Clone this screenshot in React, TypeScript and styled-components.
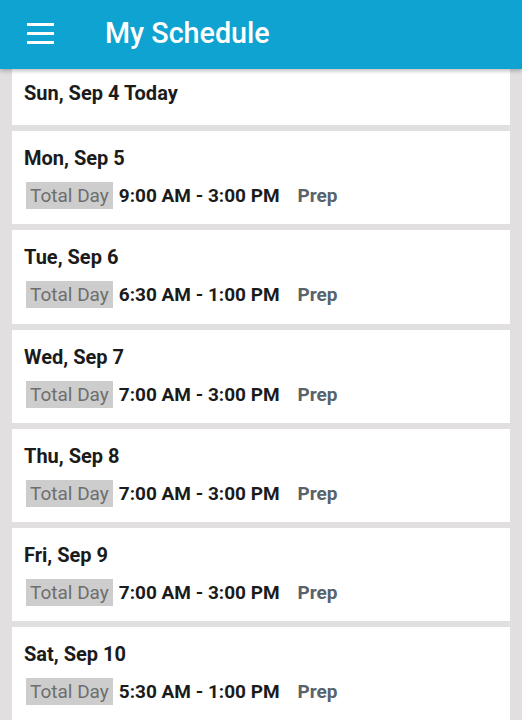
import styled, { createGlobalStyle } from "styled-components";

const GlobalStyle = createGlobalStyle`
  html, body {
    margin: 0;
    padding: 0;
    height: 100%;
    overflow: hidden;
    background: #e1dfdf;
    font-family: Roboto, "Liberation Sans", Arial, sans-serif;
  }
`;

const Screen = styled.div`
  width: 522px;
  height: 720px;
  overflow: hidden;
  background: #e1dfdf;
`;

const AppBar = styled.header`
  position: relative;
  z-index: 2;
  height: 69px;
  display: flex;
  align-items: center;
  background: #0fa3d1;
  box-shadow: 0 2px 4px rgba(0, 0, 0, 0.25);
`;

const MenuButton = styled.button`
  width: 27px;
  height: 21px;
  margin: -3px 0 0 27px;
  padding: 0;
  border: none;
  background: transparent;
  display: flex;
  flex-direction: column;
  justify-content: space-between;
`;

const MenuLine = styled.span`
  display: block;
  height: 3px;
  background: #ffffff;
`;

const Title = styled.h1`
  margin: -3px 0 0 51px;
  font-size: 28.7px;
  font-weight: 500;
  color: #ffffff;
`;

const DayList = styled.main`
  margin-top: -3px;
  padding: 0 12px;
  display: flex;
  flex-direction: column;
  gap: 6px;
`;

const DayCard = styled.section<{ $today?: boolean }>`
  background: #ffffff;
  padding: ${(p) => (p.$today ? "17px 12px 22px" : "17px 12px 15.3px")};
  display: flex;
  flex-direction: column;
  gap: 14px;
`;

const DayTitle = styled.h2`
  margin: 0;
  font-size: 20px;
  line-height: 20px;
  font-weight: 700;
  color: #1b1b1b;
`;

const ShiftRow = styled.div`
  display: flex;
  align-items: center;
  padding-left: 2px;
`;

const Badge = styled.span`
  background: #cdcdcd;
  color: #6e6e6e;
  font-size: 19px;
  line-height: 27px;
  padding: 0 4px;
`;

const Hours = styled.span`
  margin-left: 6px;
  font-size: 19px;
  font-weight: 700;
  color: #1b1b1b;
`;

const Station = styled.span`
  margin-left: 18px;
  font-size: 19px;
  font-weight: 700;
  color: #58636a;
`;

type Day = { label: string; hours?: string; today?: boolean };

const days: Day[] = [
  { label: "Sun, Sep 4 Today", today: true },
  { label: "Mon, Sep 5", hours: "9:00 AM - 3:00 PM" },
  { label: "Tue, Sep 6", hours: "6:30 AM - 1:00 PM" },
  { label: "Wed, Sep 7", hours: "7:00 AM - 3:00 PM" },
  { label: "Thu, Sep 8", hours: "7:00 AM - 3:00 PM" },
  { label: "Fri, Sep 9", hours: "7:00 AM - 3:00 PM" },
  { label: "Sat, Sep 10", hours: "5:30 AM - 1:00 PM" },
];

export default function App() {
  return (
    <Screen>
      <GlobalStyle />
      <AppBar>
        <MenuButton aria-label="Menu">
          <MenuLine />
          <MenuLine />
          <MenuLine />
        </MenuButton>
        <Title>My Schedule</Title>
      </AppBar>
      <DayList>
        {days.map((day) => (
          <DayCard key={day.label} $today={day.today}>
            <DayTitle>{day.label}</DayTitle>
            {day.hours && (
              <ShiftRow>
                <Badge>Total Day</Badge>
                <Hours>{day.hours}</Hours>
                <Station>Prep</Station>
              </ShiftRow>
            )}
          </DayCard>
        ))}
      </DayList>
    </Screen>
  );
}
